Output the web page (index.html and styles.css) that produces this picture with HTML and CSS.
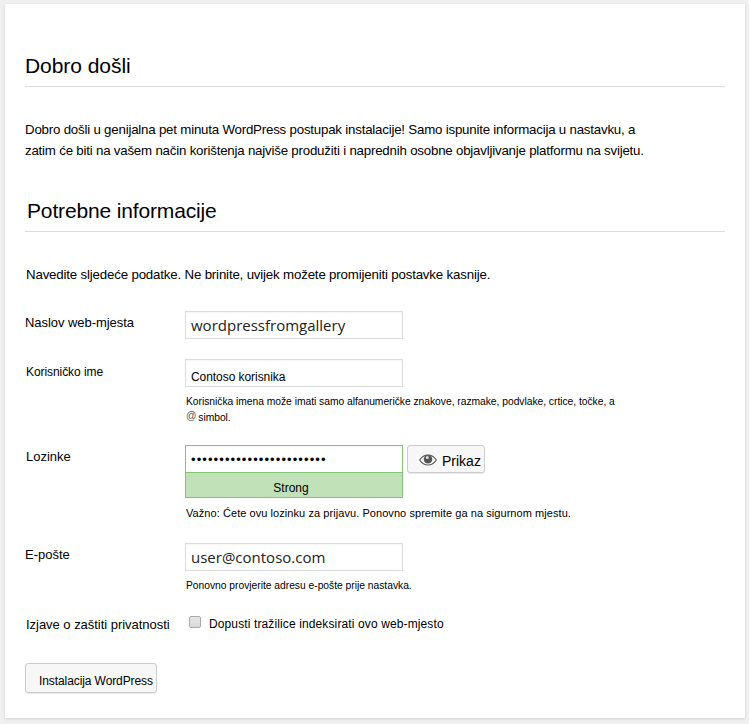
FILE: index.html
```html
<!DOCTYPE html>
<html lang="hr">
<head>
<meta charset="utf-8">
<title>WordPress</title>
<link rel="stylesheet" href="styles.css">
</head>
<body>
<main class="card">
  <h1 class="heading welcome">Dobro došli</h1>
  <p class="intro">Dobro došli u genijalna pet minuta WordPress postupak instalacije! Samo ispunite informacija u nastavku, a<br>zatim će biti na vašem način korištenja najviše produžiti i naprednih osobne objavljivanje platformu na svijetu.</p>
  <h1 class="heading needed">Potrebne informacije</h1>
  <p class="lead">Navedite sljedeće podatke. Ne brinite, uvijek možete promijeniti postavke kasnije.</p>
  <form>
    <div class="row row-title">
      <label class="label label-title">Naslov web-mjesta</label>
      <div class="cell"><div class="field typed">wordpressfromgallery</div></div>
    </div>
    <div class="row row-user">
      <label class="label label-user">Korisničko ime</label>
      <div class="cell">
        <div class="field plain">Contoso korisnika</div>
        <p class="help help-user">Korisnička imena može imati samo alfanumeričke znakove, razmake, podvlake, crtice, točke, a<br><span class="at">@</span> simbol.</p>
      </div>
    </div>
    <div class="row row-pass">
      <label class="label label-pass">Lozinke</label>
      <div class="cell">
        <div class="pass-line">
          <div class="pass">
            <div class="field secret">••••••••••••••••••••••••</div>
            <div class="strength">Strong</div>
          </div>
          <button type="button" class="button show">
            <svg class="eye" width="18" height="12" viewBox="0 0 18 12"><path d="M.7 6C3 2.500 5.800 1 9 1s6 1.500 8.300 5C15 9.500 12.200 11 9 11S3 9.500.7 6z" fill="#fff" stroke="#555" stroke-width="1.200"/><circle cx="9" cy="5.300" r="4.300" fill="#555"/><circle cx="8.300" cy="3.500" r="1.500" fill="#ddd"/></svg>
            <span>Prikaz</span>
          </button>
        </div>
        <p class="help help-pass">Važno: Ćete ovu lozinku za prijavu. Ponovno spremite ga na sigurnom mjestu.</p>
      </div>
    </div>
    <div class="row row-mail">
      <label class="label label-mail">E-pošte</label>
      <div class="cell">
        <div class="field typed">user@contoso.com</div>
        <p class="help help-mail">Ponovno provjerite adresu e-pošte prije nastavka.</p>
      </div>
    </div>
    <div class="row row-privacy">
      <label class="label label-privacy">Izjave o zaštiti privatnosti</label>
      <div class="cell check"><span class="box"></span><span class="check-text">Dopusti tražilice indeksirati ovo web-mjesto</span></div>
    </div>
    <button type="button" class="button install">Instalacija WordPress</button>
  </form>
</main>
</body>
</html>
```
FILE: styles.css
```css
* { box-sizing: border-box; }
body {
  margin: 0;
  padding: 4px 4px 6px 5px;
  height: 724px;
  overflow: hidden;
  background: #f0f0f0;
  color: #000;
  font: 13px/21px "Liberation Sans", Arial, sans-serif;
}
p, h1 { margin: 0; white-space: nowrap; }
.card {
  height: 714px;
  padding: 47px 20px 0;
  background: #fff;
  box-shadow: 0 1px 3px rgba(0, 0, 0, .13);
}
.heading {
  height: 36px;
  border-bottom: 1px solid #dcdcdc;
  font-size: 21px;
  font-weight: 400;
  line-height: 30px;
}
.welcome { letter-spacing: -.05px; }
.needed { padding-left: 2px; letter-spacing: -.15px; margin-top: 35px; }
.intro { padding-top: 32px; height: 74px; font-size: 13.3px; letter-spacing: -.21px; }
.lead { margin-top: 32px; padding-left: 1px; height: 47px; font-size: 13.3px; letter-spacing: -.18px; }
.row { display: grid; grid-template-columns: 160px 1fr; }
.row-title { height: 48px; }
.row-user { height: 86px; }
.row-pass { height: 98px; }
.row-mail { height: 71px; }
.row-privacy { height: 49px; }
.label { white-space: nowrap; }
.label-user, .label-pass, .label-privacy { padding-left: 1px; }
.label-user { padding-top: 3px; font-size: 12px; letter-spacing: -.07px; }
.label-title { padding-top: 1px; letter-spacing: -.05px; }
.label-pass { padding-top: 1px; }
.label-mail { padding-top: 1px; }
.label-privacy { letter-spacing: -.03px; }
.field {
  width: 218px;
  height: 28px;
  padding-left: 5px;
  border: 1px solid #ddd;
  background: #fff;
  box-shadow: inset 0 1px 2px rgba(0, 0, 0, .04);
  white-space: nowrap;
}
.typed { color: #222; font: 15px/26px "Open Sans", sans-serif; }
.plain { font-size: 12px; line-height: 35px; letter-spacing: -.06px; }
.help { padding-left: 1px; font-size: 11px; line-height: 16px; }
.help-user { padding-top: 7px; font-size: 10.3px; letter-spacing: -.03px; }
.at { color: #555; position: relative; top: -2px; margin-right: -1px; }
.pass-line { display: flex; gap: 4px; }
.secret { border-color: #83c373; line-height: 28px; letter-spacing: 1.1px; }
.strength {
  width: 218px;
  height: 25px;
  border: 1px solid #83c373;
  border-top: 0;
  background: #c1e1b9;
  font-size: 12px;
  line-height: 30px;
  text-align: center;
  padding-right: 6px;
}
.help-pass { padding-top: 7px; letter-spacing: .065px; }
.help-mail { padding-top: 7px; font-size: 10.3px; letter-spacing: -.02px; }
.button {
  display: flex;
  border: 1px solid #ccc;
  border-radius: 3px;
  background: #f7f7f7;
  box-shadow: 0 1px 0 rgba(0, 0, 0, .08);
  color: #000;
  font-family: inherit;
  white-space: nowrap;
}
.show { width: 78px; height: 28px; padding: 0 0 0 11px; gap: 5px; font-size: 14px; line-height: 31px; }
.eye { flex: none; margin-top: 8px; }
.install { width: 132px; height: 30px; padding: 0 0 0 13px; font-size: 12px; line-height: 34px; letter-spacing: -.09px; }
.check { display: flex; padding-left: 4px; }
.box {
  width: 12px;
  height: 12px;
  margin: 2px 8px 0 0;
  border: 1px solid #aaa;
  border-radius: 2px;
  background: linear-gradient(#e6e6e6, #dadada);
}
.check-text { font-size: 12px; letter-spacing: .12px; }
```
